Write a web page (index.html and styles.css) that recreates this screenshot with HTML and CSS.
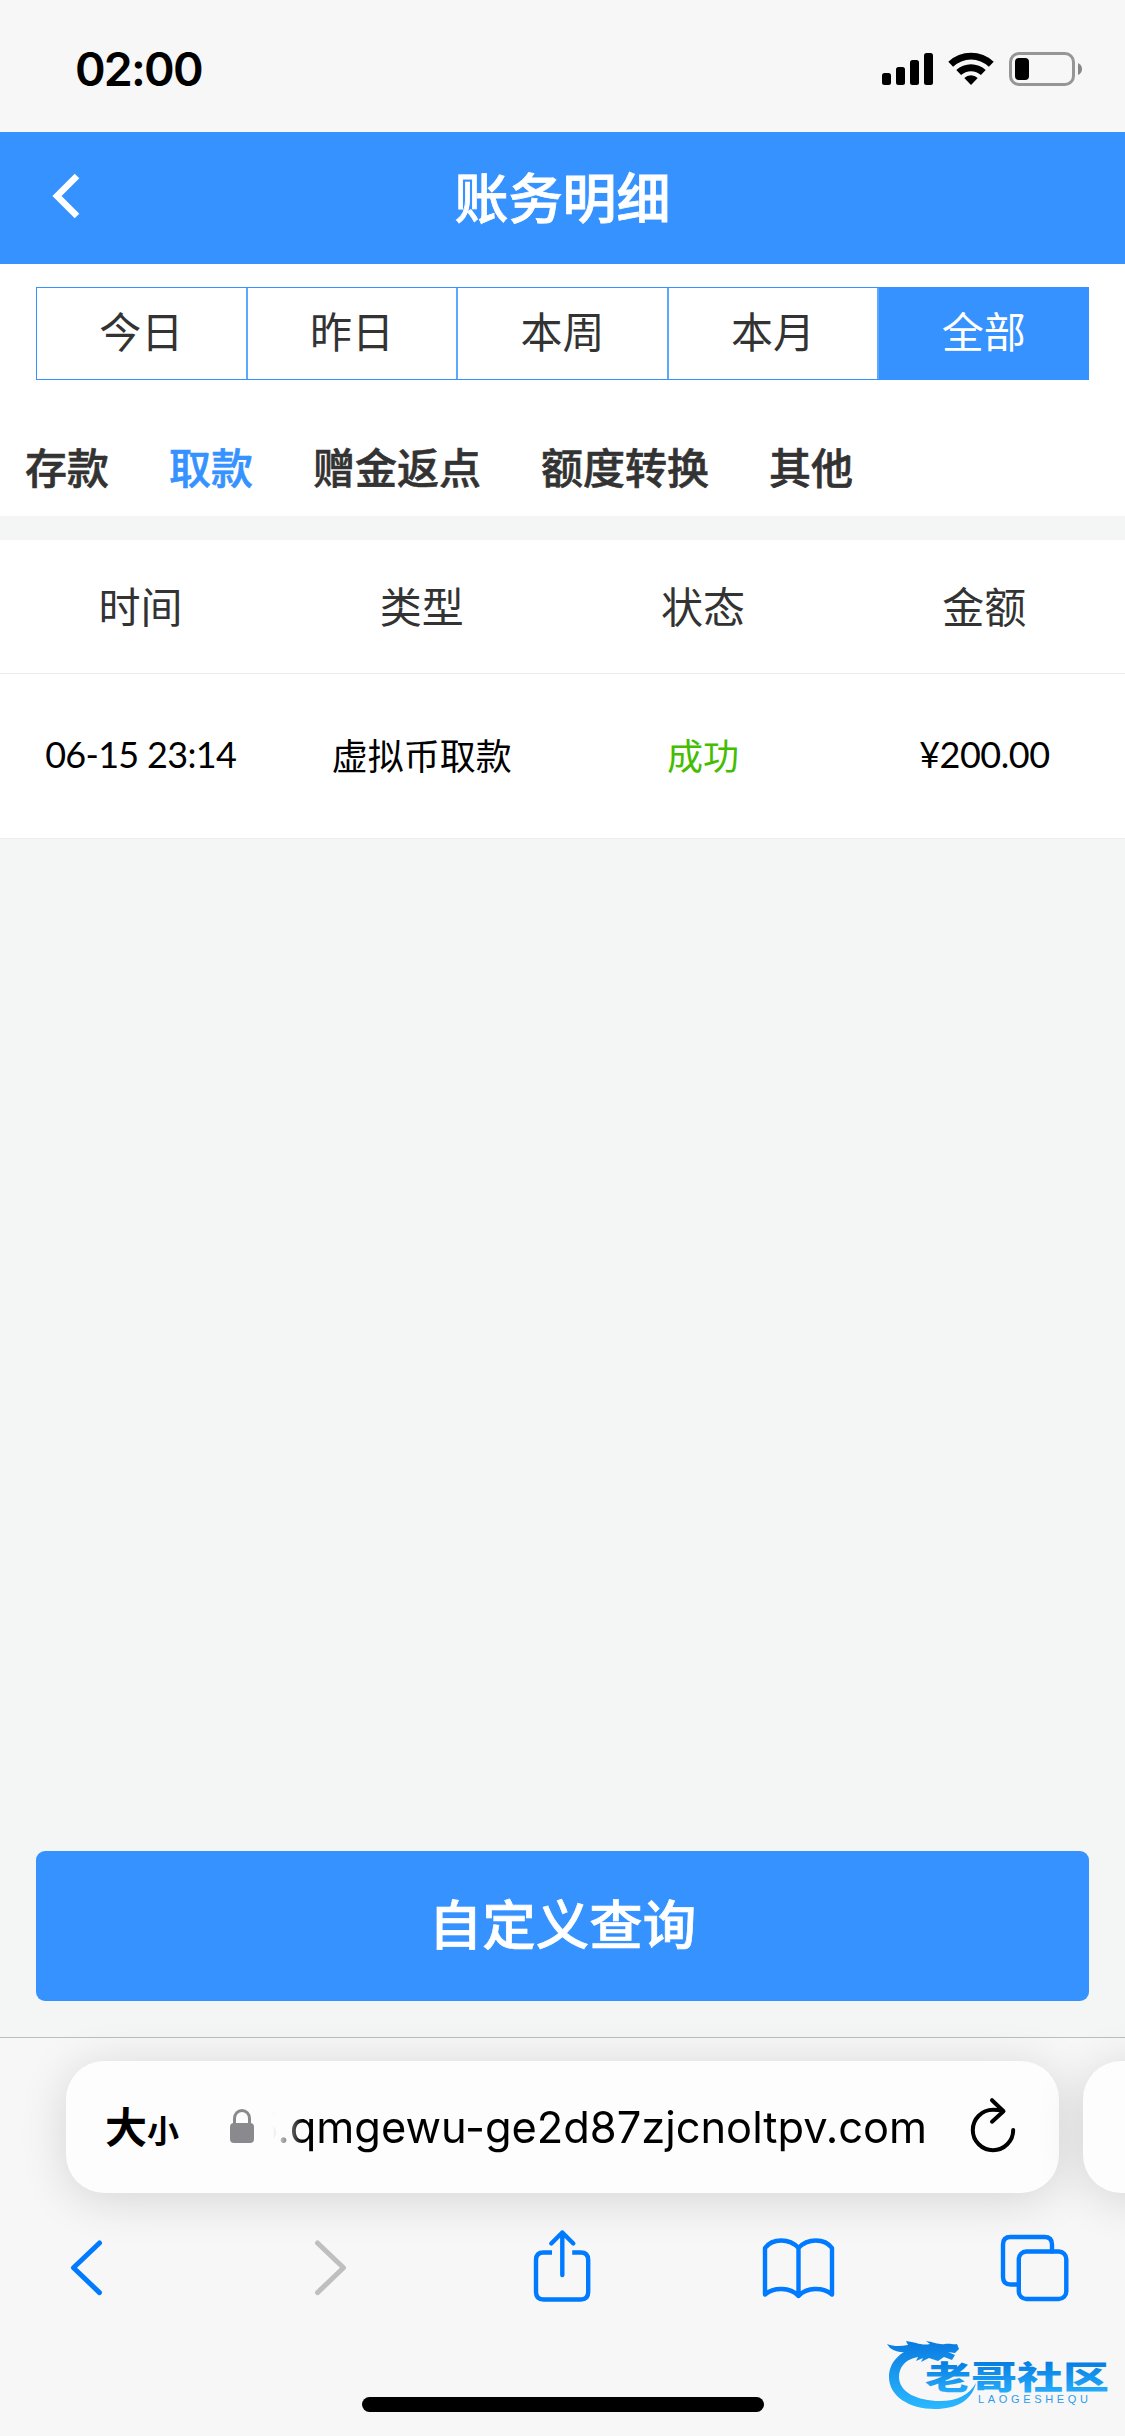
FILE: index.html
```html
<!DOCTYPE html>
<html lang="zh-CN">
<head>
<meta charset="utf-8">
<title>账务明细</title>
<link rel="stylesheet" href="styles.css">
</head>
<body>
<div class="screen">
  <div class="status">
    <span class="clock">02:00</span>
    <svg class="status-icons" width="204" height="38" viewBox="880 50 204 38">
      <rect x="882" y="73" width="9" height="12" rx="2.5"/>
      <rect x="896" y="67" width="9" height="18" rx="2.5"/>
      <rect x="910" y="60" width="9" height="25" rx="2.5"/>
      <rect x="924" y="53" width="9" height="32" rx="2.5"/>
      <path d="M948.3 61.7a33 33 0 0 1 45.4 0l-4.8 5a26 26 0 0 0-35.800 0z"/>
      <path d="M956.300 70a21.500 21.500 0 0 1 29.400 0l-4.800 5a14.600 14.600 0 0 0-19.800 0z"/>
      <path d="M964.300 78a9.800 9.800 0 0 1 13.400 0L971 85z"/>
      <rect x="1010.500" y="53.500" width="63" height="31" rx="8.500" fill="none" stroke="#969696" stroke-width="3"/>
      <rect x="1015" y="58" width="14" height="22" rx="4"/>
      <path d="M1078 63q4 2 4 6t-4 6z" fill="#868686"/>
    </svg>
  </div>
  <header class="title-bar">
    <svg class="back" width="30" height="50" viewBox="0 0 30 50"><path d="M26 5 6 25l20 20" fill="none" stroke="#fff" stroke-width="6.500"/></svg>
    <h1>账务明细</h1>
  </header>
  <div class="filters">
    <nav class="range">
      <span>今日</span><span>昨日</span><span>本周</span><span>本月</span><span class="on">全部</span>
    </nav>
    <nav class="kinds">
      <span>存款</span><span class="on">取款</span><span>赠金返点</span><span>额度转换</span><span>其他</span>
    </nav>
  </div>
  <section class="records">
    <div class="row head"><span>时间</span><span>类型</span><span>状态</span><span>金额</span></div>
    <div class="row"><span class="time">06-15 23:14</span><span>虚拟币取款</span><span class="ok">成功</span><span class="sum">¥200.00</span></div>
  </section>
  <main class="empty"></main>
  <div class="action"><div class="query">自定义查询</div></div>
  <footer class="browser">
    <div class="tabs-strip">
      <div class="address">
        <span class="size"><b>大</b><i>小</i></span>
        <svg class="lock" width="24" height="34" viewBox="0 0 24 34"><rect y="14" width="24" height="20" rx="4" fill="#8a8a8e"/><path d="M4.500 16V9.500a7.500 8 0 0 1 15 0V16" fill="none" stroke="#8a8a8e" stroke-width="3"/></svg>
        <span class="url"><span>5.qmgewu-ge2d87zjcnoltpv.com</span></span>
        <svg class="reload" width="46" height="56" viewBox="970 2097 46 56" fill="none" stroke="#000" stroke-width="4" stroke-linecap="round" stroke-linejoin="round"><path d="M1013.200 2130a20.200 20.200 0 1 1-20.200-20.200q5 0 9.500 .8"/><path d="M992 2100.200l11.500 11-11.500 10.500"/></svg>
      </div>
      <div class="next-tab"></div>
    </div>
    <svg class="tools" width="1125" height="90" viewBox="0 2222 1125 90" fill="none" stroke="#007aff" stroke-width="4.400" stroke-linecap="round" stroke-linejoin="round">
      <path d="M99.500 2243 73.500 2267.800l26 24.800" stroke-width="5"/>
      <path d="M317.500 2243l26 24.800-26 24.800" stroke="#bfbfbf" stroke-width="5"/>
      <path d="M552 2252.500h-8.500q-7.500 0-7.500 7.500v32q0 7.500 7.500 7.500h37.200q7.500 0 7.500-7.500v-32q0-7.500-7.500-7.500h-8.500" stroke-linecap="butt"/>
      <path d="M562.300 2275v-42.500m-11 11 11-11 11 11"/>
      <path d="M798.500 2248c-9-10-26-10-33.500 0v46.500c9-7.500 25-7.500 33.500 1.500 8.500-9 24.500-9 33.500-1.500V2248c-7.500-10-24.500-10-33.500 0zv48"/>
      <path d="M1018 2284.500h-7.500q-7.500 0-7.500-7.500v-32.500q0-7.500 7.500-7.500h34q7.500 0 7.500 7.500v7"/>
      <rect x="1018.800" y="2251.500" width="47.500" height="47.500" rx="7.500"/>
    </svg>
    <div class="home"></div>
  </footer>
  <svg class="mark" width="240" height="90" viewBox="880 2330 240 90">
    <defs>
      <linearGradient id="sea" gradientUnits="userSpaceOnUse" x1="0" y1="2342" x2="0" y2="2408"><stop offset="0" stop-color="#0a7be0"/><stop offset="1" stop-color="#2ab8ff"/></linearGradient>
      <linearGradient id="ink" x1="0" y1="0.200" x2="0" y2="1"><stop offset="0" stop-color="#067be0"/><stop offset="1" stop-color="#2ab4ff"/></linearGradient>
    </defs>
    <g fill="url(#sea)">
      <path d="M918 2347c-20 4-29 17-29 30 0 19 20 32 46 32 22 0 37-9 41-26-7 12-19 18-36 18-23 0-41-9-41-24 0-9 5-16 16-20z"/>
      <path d="M887 2344c8 3 14 2 21 1l-2-4c10 1 15 5 24 3l-4-3c8 1 13 4 19 3 5-1 9 1 12 0l2 5-4 4-7-1 7 3-3 5-8-3-6 4-9-3-8 4 2-4-7 3 2-4c-6 1-10 3-13 5 1-5 4-8 8-11-8 2-16 2-23-3z"/>
    </g>
    <text class="mark-name" transform="translate(925 2388.500) scale(1 .72)" fill="url(#ink)" textLength="184" lengthAdjust="spacingAndGlyphs">老哥社区</text>
    <text class="mark-latin" x="978" y="2402.500" fill="#2b9df0" textLength="110">LAOGESHEQU</text>
  </svg>
</div>
</body>
</html>
```
FILE: styles.css
```css
* { box-sizing: border-box; }
body { margin: 0; }
.screen {
  position: relative;
  width: 1125px;
  height: 2436px;
  display: flex;
  flex-direction: column;
  overflow: hidden;
  background: #f4f6f6;
  color: #333;
  font-family: Lato, "Noto Sans CJK SC", sans-serif;
  white-space: nowrap;
}
.status {
  height: 132px;
  padding: 50px 41px 0 75px;
  display: flex;
  justify-content: space-between;
  align-items: flex-start;
  background: #f7f7f7;
}
.clock {
  color: #000;
  font: 600 46.5px/38px Inter, sans-serif;
  letter-spacing: -1.8px;
}
.title-bar {
  height: 132px;
  padding: 0 51px 4px;
  display: grid;
  grid-template-columns: 30px 1fr 30px;
  align-items: center;
  background: #3592ff;
  color: #fff;
}
.title-bar h1 {
  margin: 0;
  text-align: center;
  font: 500 54px/126px "Noto Sans CJK SC", sans-serif;
  -webkit-text-stroke: .8px;
}
.filters { height: 252px; padding-top: 23px; background: #fff; }
.range {
  height: 93px;
  margin: 0 36px;
  display: flex;
  border: 1px solid #3592ff;
}
.range span {
  flex: 1;
  font-size: 42px;
  line-height: 88px;
  text-align: center;
}
.range span + span { border-left: 2px solid #5ba8fd; }
.range .on { background: #3592ff; color: #fff; }
.kinds {
  padding: 42px 25px 0;
  display: flex;
  gap: 60px;
  font-size: 42px;
  font-weight: 500;
  font-family: "Noto Sans CJK SC", sans-serif;
  line-height: 88px;
  -webkit-text-stroke: .6px;
}
.kinds .on { color: #3592ff; }
.records { margin-top: 24px; background: #fff; }
.row {
  height: 165px;
  padding-bottom: 5px;
  display: grid;
  grid-template-columns: repeat(4, 1fr);
  align-items: center;
  text-align: center;
  color: #000;
  font-size: 36px;
  border-bottom: 1px solid #eceeee;
}
.head { height: 134px; color: #333; font-size: 42px; }
.row .ok { color: #45bd00; }
.time { letter-spacing: -.7px; }
.sum { letter-spacing: -.5px; }
.empty { flex: 1; }
.action { padding: 0 36px 36px; }
.query {
  height: 150px;
  border-radius: 9px;
  background: #3592ff;
  color: #fff;
  text-align: center;
  font: 500 53.5px/142px "Noto Sans CJK SC", sans-serif;
  -webkit-text-stroke: .7px;
}
.browser {
  height: 399px;
  border-top: 1px solid #b9bfbd;
  background: #f7f7f7;
}
.tabs-strip {
  height: 184px;
  padding: 23px 0 29px 66px;
  display: flex;
  gap: 24px;
}
.address, .next-tab {
  height: 132px;
  border-radius: 38px;
  background: #fdfdfd;
  box-shadow: 0 6px 48px rgba(0, 0, 0, .14);
}
.address {
  width: 993px;
  flex: none;
  padding: 0 43px 0 39px;
  display: flex;
  align-items: center;
  color: #000;
}
.next-tab { width: 120px; flex: none; }
.size {
  width: 125px;
  display: flex;
  align-items: baseline;
  font-family: "Noto Sans CJK SC", sans-serif;
  line-height: 60px;
}
.size b { font-size: 42px; font-weight: 700; }
.size i { font-size: 32px; font-style: normal; font-weight: 700; }
.lock { margin-bottom: 2px; }
.url {
  width: 654px;
  margin-left: 19px;
  display: flex;
  justify-content: flex-end;
  overflow: hidden;
  font: 400 43.400px/60px Inter, sans-serif;
  -webkit-mask-image: linear-gradient(90deg, transparent, #000 30px);
  mask-image: linear-gradient(90deg, transparent, #000 30px);
}
.reload { margin-left: 43px; margin-bottom: 4px; }
.tools { display: block; position: relative; }
.home {
  width: 402px;
  height: 15px;
  margin: 85px auto 0;
  border-radius: 8px;
  background: #000;
}
.mark { position: absolute; left: 880px; top: 2330px; }
.mark-name { font: 900 45px "Noto Sans CJK SC", sans-serif; }
.mark-latin { font: 400 11px "Liberation Sans", sans-serif; }
```
